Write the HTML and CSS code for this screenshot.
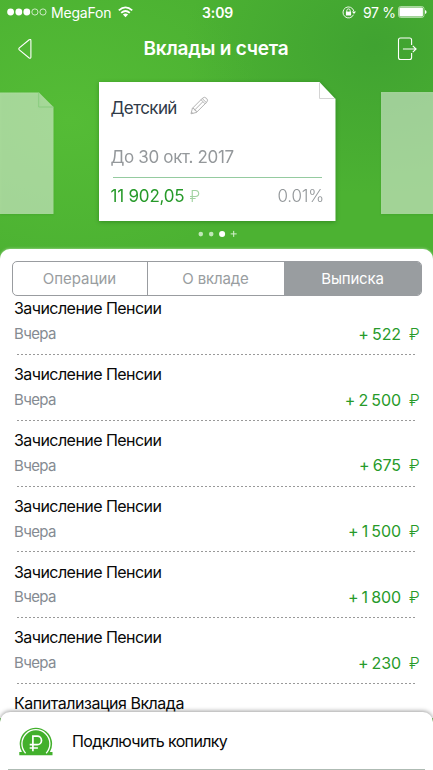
FILE: index.html
```
<!DOCTYPE html>
<html lang="ru">
<head>
<meta charset="utf-8">
<title>Вклады и счета</title>
<link rel="stylesheet" href="styles.css">
</head>
<body>
<div class="app">
  <div class="status">
    <svg class="signal" width="40" height="12" viewBox="0 0 40 12"><g fill="#fff"><circle cx="3.6" cy="6" r="3.4"/><circle cx="11.8" cy="6" r="3.4"/><circle cx="19.8" cy="6" r="3.4"/></g><g fill="none" stroke="#fff" stroke-width=".7"><circle cx="27.9" cy="6" r="3.1"/><circle cx="36" cy="6" r="3.1"/></g></svg>
    <span class="carrier">MegaFon</span>
    <svg class="wifi" width="15" height="12" viewBox="0 0 15 12" fill="none" stroke="#fff" stroke-width="1.8"><path d="M.8 4.4Q7.5-1.7 14.2 4.4M3.2 6.9Q7.5 3.1 11.8 6.9"/><path d="M7.5 11.3L4.9 8.6Q7.5 6.5 10.1 8.6Z" fill="#fff" stroke="none"/></svg>
    <span class="clock">3:09</span>
    <svg class="lock" width="14" height="13" viewBox="0 0 14 13" fill="none" stroke="#fff" stroke-width=".9"><path d="M11.5 8.7A5.5 5.5 0 1 1 11.8 5"/><path d="M9.9 5.6H14L12 8Z" fill="#fff" stroke="none"/><path d="M4.8 6V4.6a1.7 1.7 0 0 1 3.4 0V6"/><path d="M3.9 5.6h5.2v3.9H3.9z" fill="#fff" stroke="none"/></svg>
    <span class="percent">97 %</span>
    <svg class="battery" width="29" height="12" viewBox="0 0 29 12"><rect x=".5" y=".5" width="25.5" height="11" rx="2.2" fill="none" stroke="#d7f1cf" stroke-width=".7"/><rect x="1.4" y="1.4" width="23.5" height="9.2" rx="1" fill="#fff"/><path d="M27 4v4q1.6-.6 1.6-2T27 4" fill="#fff"/></svg>
  </div>
  <header class="bar">
    <svg class="back" width="15" height="22" viewBox="0 0 15 22"><path d="M11.2 1.7L1.3 9.8q-1 1 0 2L11.2 20q1.7.8 1.7-1V2.7q0-1.8-1.7-1z" fill="none" stroke="#fff" stroke-width="1.1"/></svg>
    <h1 class="title">Вклады и счета</h1>
    <svg class="exit" width="20" height="24" viewBox="0 0 20 24" fill="none" stroke="#fff" stroke-width="1.1"><path d="M14.6 8V3q0-2-2-2H3.5q-2 0-2 2v17.5q0 2 2 2h9.1q2 0 2-2V16M5.9 12H18.9M15.8 8.8L19.1 12l-3.3 3.2"/></svg>
  </header>
  <section class="carousel">
    <svg class="side" width="54" height="123" viewBox="0 0 54 123"><path d="M0 .5H39L53.5 15V122H0z" fill="#fff" fill-opacity=".5"/><path d="M38.7.5V15H53.5" fill="none" stroke="#82c977" stroke-width=".8"/></svg>
    <div class="card-wrap">
    <article class="card">
      <svg class="fold" width="17" height="18" viewBox="0 0 17 18"><path d="M.5.5V16.5H17" fill="none" stroke="#d4d4d4"/></svg>
      <div class="name"><span class="name-text">Детский</span>
        <svg class="pencil" width="19" height="19" viewBox="0 0 19 19" fill="none" stroke="#aaa" stroke-width=".9" stroke-linejoin="round"><path d="M1 17.8L2.4 12.3 12.7 2q1.8-1.5 3.8.3t.3 3.8L6.5 16.4zM2.4 12.3q2.1-.5 2.2 1.8 2.2.1 1.9 2.3M11 3.7l4.1 4.1M12.2 2.5l4.1 4.1M4.6 14.1l8.1-8.2M1.5 16l1.3 1.3"/></svg>
      </div>
      <div class="term"><span>До 30 окт. 2017</span></div>
      <div class="balance"><span class="sum">11 902,05</span><span class="cur">₽</span><span class="rate">0.01%</span></div>
    </article>
    </div>
    <div class="side next"></div>
  </section>
  <svg class="dots" width="40" height="8" viewBox="0 0 40 8"><g fill="#c1e8b8"><circle cx="2.8" cy="4.1" r="2.3"/><circle cx="13.2" cy="4.1" r="2.3"/></g><circle cx="24.1" cy="4" r="3" fill="#fff"/><path d="M32.7 3.9h6M35.7.9v6" stroke="#d7f1cf" stroke-width="1"/></svg>
  <main class="sheet">
    <nav class="tabs"><div class="tab"><span class="t1">Операции</span></div><div class="tab"><span class="t2">О вкладе</span></div><div class="tab on"><span class="t3">Выписка</span></div></nav>
    <div class="list">
      <div class="row"><div class="op">Зачисление Пенсии</div><div class="line"><span class="day">Вчера</span><span class="amt">+ 522</span><span class="rub">₽</span></div></div>
      <div class="row"><div class="op">Зачисление Пенсии</div><div class="line"><span class="day">Вчера</span><span class="amt">+ 2 500</span><span class="rub">₽</span></div></div>
      <div class="row"><div class="op">Зачисление Пенсии</div><div class="line"><span class="day">Вчера</span><span class="amt">+ 675</span><span class="rub">₽</span></div></div>
      <div class="row"><div class="op">Зачисление Пенсии</div><div class="line"><span class="day">Вчера</span><span class="amt">+ 1 500</span><span class="rub">₽</span></div></div>
      <div class="row"><div class="op">Зачисление Пенсии</div><div class="line"><span class="day">Вчера</span><span class="amt">+ 1 800</span><span class="rub">₽</span></div></div>
      <div class="row"><div class="op">Зачисление Пенсии</div><div class="line"><span class="day">Вчера</span><span class="amt">+ 230</span><span class="rub">₽</span></div></div>
      <div class="row last"><div class="op">Капитализация Вклада</div></div>
    </div>
  </main>
  <footer class="promo">
    <svg class="coin" width="34" height="30" viewBox="0 0 34 30"><path d="M.3 29.2V26H2.9A16.2 16.2 0 1 1 30.9 26H33.5v3.2z" fill="#42b02c"/><path d="M6.6 27.2A14 14 0 1 1 27.2 27.2" fill="none" stroke="#fff" stroke-width="1.3"/><path d="M13.9 25.3V10.2h4.4a4.2 4.2 0 0 1 0 8.4h-7.6M10.7 22h8.2" fill="none" stroke="#fff" stroke-width="1.7"/></svg>
    <span class="promo-text">Подключить копилку</span>
  </footer>
</div>
</body>
</html>
```
FILE: styles.css
```
* { box-sizing: border-box; }
body { margin: 0; font-family: Inter, "Noto Sans", sans-serif; }
.app {
  position: relative; width: 433px; height: 770px; overflow: hidden;
  display: flex; flex-direction: column;
  background: radial-gradient(ellipse 190px 150px at 375px 45px, rgba(54,150,48,.55), rgba(54,150,48,0)) 0 0 / 433px 250px no-repeat,
    radial-gradient(ellipse 200px 150px at 70px 120px, #55bc36, rgba(85,188,54,0)) 0 0 / 433px 250px no-repeat, #4cb232;
}
svg { display: block; flex: none; }
span, .op { white-space: nowrap; }
.status { height: 24px; display: flex; align-items: center; padding-left: 7px; color: #fff; font-size: 14px; flex: none; }
.carrier { width: 60px; margin-left: 4px; letter-spacing: -.2px; }
.wifi { margin-left: 7px; }
.clock { margin-left: 69px; width: 32px; font-weight: 600; letter-spacing: -.1px; }
.lock { margin-left: 108px; }
.percent { margin-left: 7px; width: 32px; letter-spacing: -.3px; }
.battery { margin-left: 3px; }
.bar { height: 51px; padding: 0 16px 2px 18px; display: flex; align-items: center; justify-content: space-between; flex: none; }
.title { margin: 0 0 0 2px; color: #fff; font-size: 19px; font-weight: 600; line-height: 24px; letter-spacing: -.22px; white-space: nowrap; }
.carousel { height: 155px; flex: none; display: flex; align-items: flex-start; padding-top: 7px; }
.side { margin-top: 10px; filter: drop-shadow(0 1px 1px rgba(0,80,0,.2)); }
.next { width: 52px; height: 122px; margin-left: 45px; background: rgba(255,255,255,.5); }
.card-wrap { margin-left: 44.5px; filter: drop-shadow(0 1px 2px rgba(0,70,0,.35)); }
.card { position: relative; width: 237.5px; height: 139px; padding: 14px 12px 0 12px; background: #fff; clip-path: polygon(0 0,221px 0,237px 17px,237px 100%,0 100%); }
.fold { position: absolute; right: .5px; top: 0; }
.name { height: 24px; display: flex; align-items: center; color: #303a48; font-size: 17px; }
.name-text { width: 79px; letter-spacing: -.6px; }
.pencil { margin-top: -5px; }
.term { height: 58px; padding-top: 25.5px; margin: 0 2px; border-bottom: 1px solid #95cba0; color: #94989b; font-size: 17px; font-weight: 400; line-height: 22px; letter-spacing: -.35px; }
.term span { margin-left: -2px; }
.balance { display: flex; height: 36px; align-items: center; font-size: 17px; font-weight: 350; color: #279a2a; }
.sum { width: 79px; font-weight: 400; letter-spacing: -.2px; }
.cur { color: #a2d3a2; font-size: 16px; }
.rate { margin-left: auto; color: #94989b; letter-spacing: -.2px; }
.dots { margin: 0 0 0 198px; }
.sheet { margin-top: 11px; height: 469px; background: #fff; border-radius: 10px 10px 0 0; padding-top: 12px; flex: none; box-shadow: 0 0 3px rgba(255,255,255,.6); }
.tabs { width: 410px; height: 35px; margin-left: 11.5px; display: flex; border: 1px solid #999ca0; border-radius: 5px; overflow: hidden; }
.tab { width: 135px; border-right: 1px solid #999ca0; display: flex; align-items: center; justify-content: center; color: #999da0; font-size: 15px; }
.tab + .tab { width: 137px; }
.t2 { letter-spacing: -.15px; }
.t3 { letter-spacing: -.2px; }
.tab.on { flex: 1; background: #999da0; color: #fff; border: 0; }
.list { margin-top: -6.8px; padding: 0 14px; }
.row { height: 65.8px; padding-top: 9.2px; background: repeating-linear-gradient(90deg, #999 0 2px, transparent 2px 4px) 3px 100% / calc(100% - 6px) 1px no-repeat; }
.last { background: none; }
.op { height: 20px; line-height: 20px; font-size: 16px; letter-spacing: -.55px; color: #080808; }
.last .op { letter-spacing: -.47px; }
.line { display: flex; height: 20px; margin-top: 5.4px; align-items: center; font-size: 15px; color: #858b92; }
.day { letter-spacing: -.65px; }
.amt { margin-left: auto; font-size: 16px; letter-spacing: -.1px; word-spacing: -1.2px; color: #279a2a; }
.rub { width: 10px; margin: 0 0 0 8px; font-size: 16px; font-weight: 350; color: #279a2a; }
.promo { position: absolute; left: 0; top: 712px; width: 433px; height: 58px; background: linear-gradient(#aebbb3,#aebbb3) 8px 57px / 417px 1px no-repeat, #fff; border-radius: 10px 10px 0 0; box-shadow: 0 -1px 4px rgba(0,0,0,.38); display: flex; align-items: center; padding-left: 19px; }
.promo-text { margin-left: 19px; font-size: 16px; letter-spacing: -.63px; color: #080808; }
```
